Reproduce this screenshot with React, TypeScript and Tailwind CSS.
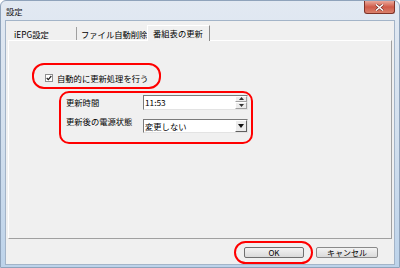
import React from "react";

const FONT = { fontFamily: '"Noto Sans CJK JP", "Noto Sans", sans-serif' };

function SpinButton({ up }: { up: boolean }) {
  return (
    <div className="flex-1 flex items-center justify-center bg-[#ececec] border border-t-white border-l-white border-r-[#a0a0a0] border-b-[#a0a0a0]">
      <svg width="5" height="3" viewBox="0 0 5 3">
        {up ? <path d="M2.5 0 L5 3 L0 3 Z" fill="#333" /> : <path d="M0 0 L5 0 L2.5 3 Z" fill="#333" />}
      </svg>
    </div>
  );
}

export default function App() {
  return (
    <div
      style={FONT}
      className="w-[400px] h-[268px] flex flex-col border border-[#8fa3bb] rounded-t-[6px] overflow-hidden bg-gradient-to-b from-[#e2e9f2] via-[#d3e0ee] to-[#bdd3ea] text-black whitespace-nowrap"
    >
      {/* Title bar */}
      <div className="h-[19px] flex items-start justify-between">
        <span className="ml-[5px] mt-[5px] text-[8.3px] leading-[10px] text-[#111]">設定</span>
        <div className="w-[31px] h-[13px] mr-[4px] rounded-b-[3px] border border-t-0 border-[#7d3328] bg-gradient-to-b from-[#e9a99c] via-[#cf5a48] to-[#d9826e] flex items-center justify-center">
          <svg width="9" height="7" viewBox="0 0 9 7">
            <path d="M1 0.5 L8 6.5 M8 0.5 L1 6.5" stroke="#6b2a22" strokeWidth="2.6" />
            <path d="M1 0.5 L8 6.5 M8 0.5 L1 6.5" stroke="#ffffff" strokeWidth="1.5" />
          </svg>
        </div>
      </div>

      {/* Client area */}
      <div className="mx-[4px] h-[245px] mb-[2px] bg-[#f0f0f0] border border-[#a3b4c8] flex flex-col">
        {/* Tabs */}
        <div className="h-[19px] pt-[4px] pl-[2px] flex items-end text-[8.3px] leading-[10px]">
          <div className="w-[69px] h-[13px] pl-[6px] flex items-center border-r border-[#a0a0a0]">iEPG設定</div>
          <div className="w-[70px] h-[13px] pl-[4px] flex items-center overflow-visible">ファイル自動削除</div>
          <div className="relative z-10 w-[63px] h-[16px] -mb-[1px] pl-[5px] pb-[2px] flex items-center bg-[#f0f0f0] border-t border-l border-white border-r border-r-[#8a8a8a]">
            番組表の更新
          </div>
        </div>

        {/* Tab panel */}
        <div className="mx-[2px] h-[199px] border border-t-white border-l-white border-r-[#a0a0a0] border-b-[#a0a0a0] flex flex-col text-[8.3px] leading-[10px]">
          {/* Checkbox annotation */}
          <div className="ml-[23px] mt-[22px] w-[129px] h-[26px] border-[2.5px] border-[#ff0000] rounded-[12px] flex items-start pl-[11px] pt-[9px] gap-[4px]">
            <div className="w-[8px] h-[8px] bg-white border border-[#8e8f8f] flex items-center justify-center">
              <svg width="6" height="6" viewBox="0 0 6 6">
                <path d="M0.7 3 L2.3 4.7 L5.3 1" stroke="#222" strokeWidth="1.2" fill="none" />
              </svg>
            </div>
            <span className="-mt-[1px]">自動的に更新処理を行う</span>
          </div>

          {/* Fields annotation */}
          <div className="ml-[50px] mt-[2px] w-[194px] h-[53px] border-[2.5px] border-[#ff0000] rounded-[10px] pl-[5px] pr-[3px] pt-[1.5px] flex flex-col gap-[6px]">
            <div className="flex items-center">
              <span className="w-[77px]">更新時間</span>
              <div className="w-[105px] h-[15px] flex bg-white border border-t-[#7a7a7a] border-l-[#7a7a7a] border-r-[#e3e3e3] border-b-[#e3e3e3]">
                <span className="flex-1 pl-[1px] flex items-center">11:53</span>
                <div className="w-[12px] flex flex-col">
                  <SpinButton up={true} />
                  <SpinButton up={false} />
                </div>
              </div>
            </div>
            <div className="flex items-start">
              <span className="w-[77px]">更新後の電源状態</span>
              <div className="mt-[3px] w-[105px] h-[14px] flex bg-white border border-t-[#7a7a7a] border-l-[#7a7a7a] border-r-[#e3e3e3] border-b-[#e3e3e3]">
                <span className="flex-1 pl-[1px] flex items-center">変更しない</span>
                <div className="w-[12px] flex items-center justify-center bg-[#ececec] border border-t-white border-l-white border-r-[#606060] border-b-[#606060]">
                  <svg width="6" height="4" viewBox="0 0 6 4">
                    <path d="M0 0 L6 0 L3 4 Z" fill="#111" />
                  </svg>
                </div>
              </div>
            </div>
          </div>
        </div>

        {/* Buttons */}
        <div className="flex-1 flex items-center justify-end pr-[16px] text-[8px] leading-[9px]">
          <div className="w-[79px] h-[23px] mt-[1px] border-[2.5px] border-[#ff0000] rounded-[12px] flex items-center pl-[8px]">
            <div className="w-[60px] h-[11px] flex items-center justify-center rounded-[2px] border border-[#6f6f6f] bg-gradient-to-b from-[#f4f4f4] to-[#dadada]">
              OK
            </div>
          </div>
          <div className="ml-[3px] w-[62px] h-[11px] mt-[1px] flex items-center justify-center rounded-[2px] border border-[#8a8a8a] bg-gradient-to-b from-[#f4f4f4] to-[#dadada]">
            キャンセル
          </div>
        </div>
      </div>
    </div>
  );
}
